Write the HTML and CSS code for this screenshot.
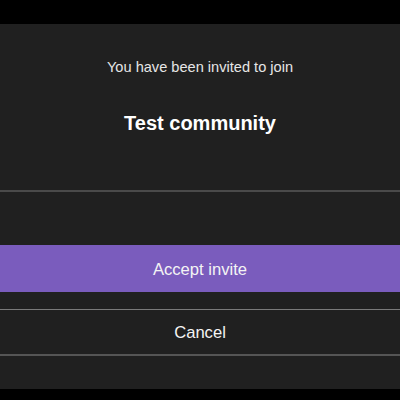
FILE: index.html
```html
<!DOCTYPE html>
<html>
<head>
<meta charset="utf-8">
<link rel="stylesheet" href="styles.css">
</head>
<body>
<div class="topbar"></div>
<div class="sheet">
  <p class="intro">You have been invited to join</p>
  <h1 class="title">Test community</h1>
  <div class="divider divider-top"></div>
  <button class="btn btn-accept">Accept invite</button>
  <div class="divider divider-mid"></div>
  <button class="btn btn-cancel">Cancel</button>
  <div class="divider divider-bottom"></div>
</div>
</body>
</html>
```
FILE: styles.css
```css
html, body {
  margin: 0;
  padding: 0;
  background: #000;
  width: 400px;
  height: 400px;
  overflow: hidden;
  font-family: "Liberation Sans", Arial, sans-serif;
}
.topbar {
  height: 24px;
  background: #000;
}
.sheet {
  height: 365px;
  background: #202020;
  display: flex;
  flex-direction: column;
  color: #f2f2f2;
}
.intro {
  margin: 33px 0 0;
  font-size: 14.6px;
  line-height: 20px;
  text-align: center;
  color: #e6e6e6;
}
.title {
  margin: 34px 0 0;
  font-size: 20px;
  line-height: 24px;
  font-weight: bold;
  text-align: center;
  color: #fff;
}
.divider {
  flex: none;
}
.divider-top {
  margin-top: 55px;
  height: 2px;
  background: #4a4a4a;
}
.btn {
  border: 0;
  margin: 0;
  padding: 0;
  width: 100%;
  font-family: inherit;
  font-size: 16.6px;
  color: #f4f4f4;
  text-align: center;
  display: block;
}
.btn-accept {
  margin-top: 53px;
  height: 47px;
  padding-top: 2px;
  background: #7a5cbd;
}
.divider-mid {
  margin-top: 17px;
  height: 1px;
  background: #7a7a7a;
}
.btn-cancel {
  height: 44px;
  padding-top: 2px;
  background: transparent;
}
.divider-bottom {
  height: 2px;
  background: #555;
}
```
